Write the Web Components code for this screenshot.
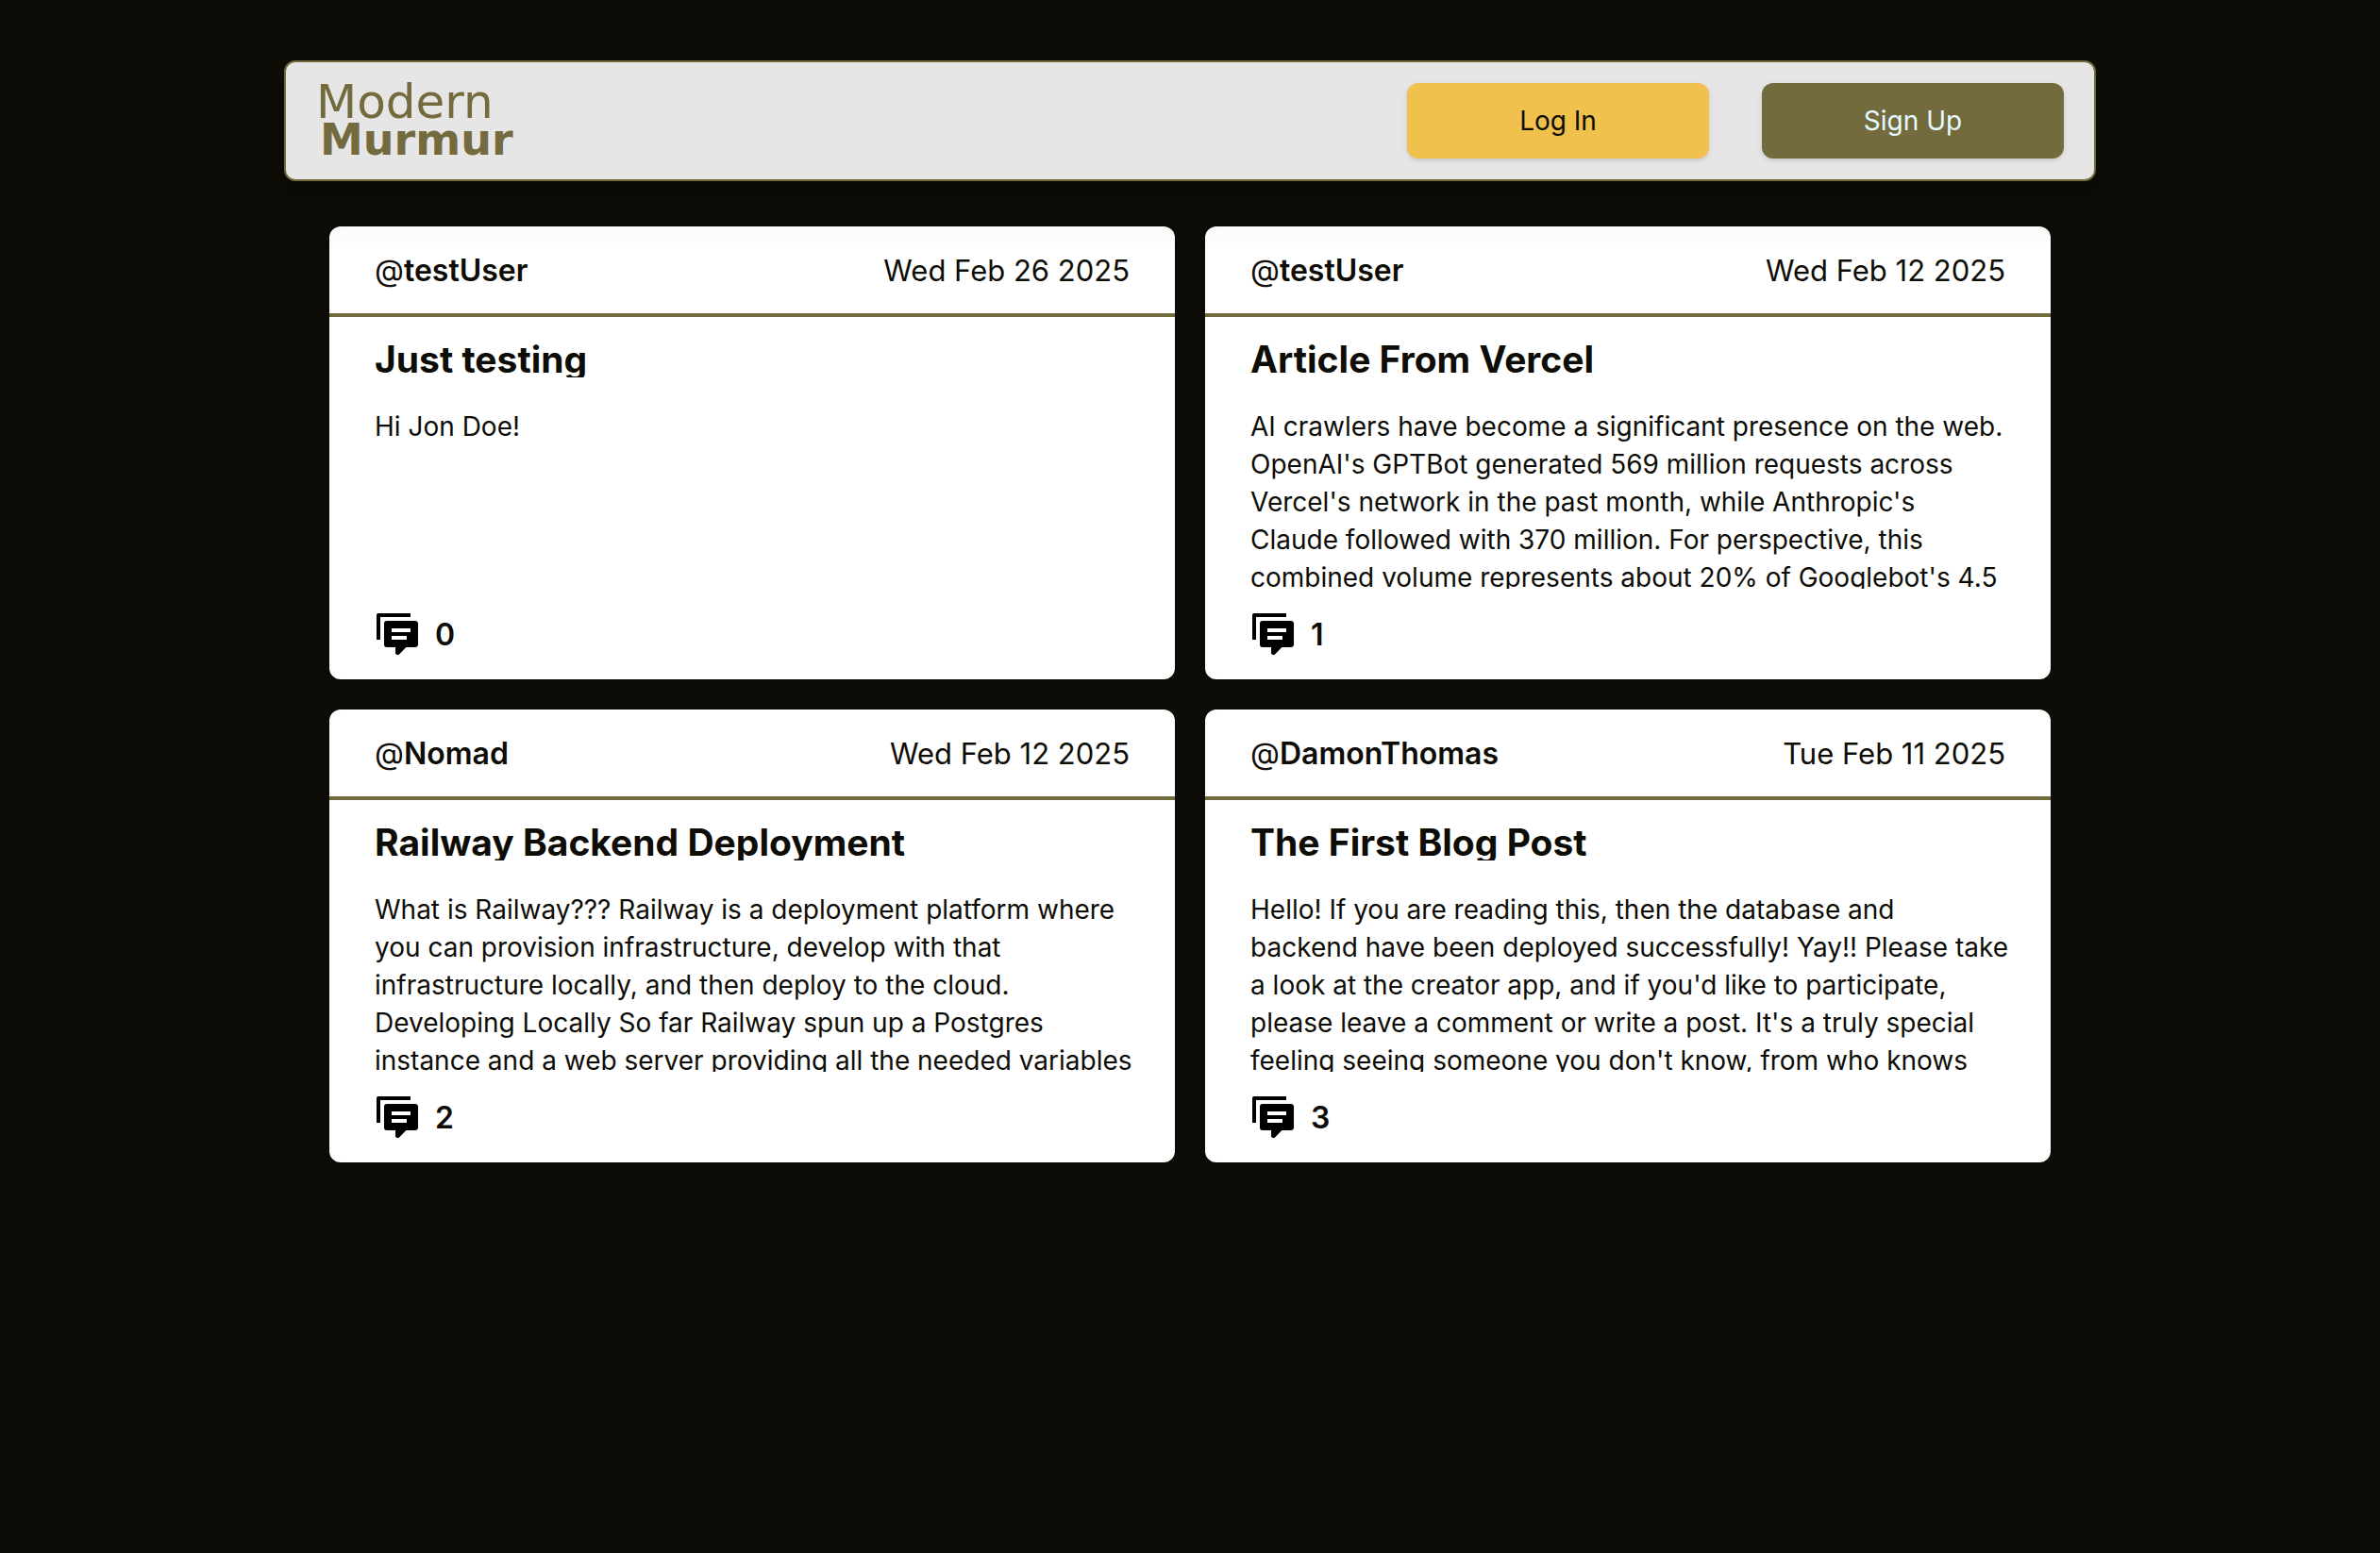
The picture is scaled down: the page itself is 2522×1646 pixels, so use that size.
<!DOCTYPE html>
<html lang="en">
<head>
<meta charset="utf-8">
<meta name="viewport" content="width=device-width, initial-scale=1">
<title>Modern Murmur</title>
<style>
  html { background: #0d0c06; }
  body {
    margin: 0;
    color: #0d0c06;
    font-family: Inter, "Liberation Sans", sans-serif;
    --ink: #0d0c06;
    --olive: #736b3d;
    --gold: #f0c14d;
    --panel: #e6e6e6;
    --ice: #e6fbff;
  }
</style>
</head>
<body>
<murmur-app></murmur-app>

<script>
const define = (name, html, setup) => {
  const template = document.createElement('template');
  template.innerHTML = html;
  customElements.define(name, class extends HTMLElement {
    constructor() {
      super();
      this.attachShadow({ mode: 'open' }).append(template.content.cloneNode(true));
    }
    connectedCallback() { if (setup) setup(this, this.shadowRoot); }
  });
};

define('murmur-logo', `
  <style>
    :host { display: block; }
    a {
      display: flex; flex-direction: column;
      color: var(--olive); text-decoration: none;
      font: 400 50px/40px "DejaVu Sans", sans-serif;
    }
    b { padding-left: 4px; font-size: 46px; font-weight: 700; }
  </style>
  <a href="#"><span>Modern</span><b>Murmur</b></a>
`);

define('murmur-button', `
  <style>
    :host { display: block; width: 320px; }
    button {
      width: 100%; height: 80px; padding: 0;
      border: 0; border-radius: 12px;
      background: var(--gold); color: var(--ink);
      font: 400 28px/40px Inter, "Liberation Sans", sans-serif;
      box-shadow: 0 2px 6px rgb(0 0 0 / .1), 0 2px 4px -2px rgb(0 0 0 / .1);
      cursor: pointer;
    }
    :host([variant="olive"]) button { background: var(--olive); color: var(--ice); }
  </style>
  <button type="button"><slot></slot></button>
`);

define('murmur-nav', `
  <style>
    :host { display: block; position: relative; z-index: 1; }
    nav {
      display: flex; align-items: center; justify-content: space-between;
      box-sizing: border-box; min-height: 128px;
      padding: 0 32px;
      border: 2px solid var(--olive); border-radius: 12px;
      background: var(--panel);
      box-shadow: 0 40px 50px -10px rgb(0 0 0 / .1), 0 16px 20px -12px rgb(0 0 0 / .1);
    }
    .actions { display: flex; gap: 56px; }
  </style>
  <nav>
    <murmur-logo></murmur-logo>
    <div class="actions">
      <murmur-button>Log In</murmur-button>
      <murmur-button variant="olive">Sign Up</murmur-button>
    </div>
  </nav>
`);

define('comments-icon', `
  <style>:host { display: block; width: 48px; height: 48px; } svg { display: block; }</style>
  <svg width="48" height="48" viewBox="0 0 24 24" fill="#000" aria-hidden="true">
    <path d="M1 15V2a1 1 0 0 1 1-1h17v2H3v12z"/>
    <path fill-rule="evenodd" d="M6.500 5h15A1.500 1.500 0 0 1 23 6.500v11a1.500 1.500 0 0 1-1.500 1.500h-4.800l-3.700 3.700a1 1 0 0 1-.7.3H12a1 1 0 0 1-1-1v-3H6.500A1.500 1.500 0 0 1 5 17.500v-11A1.500 1.500 0 0 1 6.500 5zM9 9v2h10V9zM9 13v2h8v-2z"/>
  </svg>
`);

define('post-card', `
  <style>
    :host { display: block; min-width: 0; }
    article { border-radius: 12px; background: #fff; overflow: hidden; }
    header {
      display: flex; align-items: baseline; justify-content: space-between;
      padding: 25px 48px 23px; border-bottom: 4px solid var(--olive);
      font-size: 32px; line-height: 44px;
    }
    .user b { font-weight: 600; }
    time { font-size: 31px; }
    .main { display: flex; flex-direction: column; gap: 32px; padding: 24px 40px 0 48px; }
    h2 {
      height: 40px; margin: 0; overflow: hidden;
      font-size: 39px; line-height: 42px; font-weight: 650;
    }
    .body { height: 192px; overflow: hidden; font-size: 28px; line-height: 40px; }
    footer {
      display: flex; align-items: center; gap: 16px; padding: 24px 48px;
      font-size: 32px; line-height: 44px; font-weight: 600;
    }
    .count { padding-top: 2px; }
  </style>
  <article>
    <header><span class="user">@<b></b></span><time></time></header>
    <div class="main">
      <h2></h2>
      <div class="body"><slot></slot></div>
    </div>
    <footer><comments-icon></comments-icon><span class="count"></span></footer>
  </article>
`, (host, root) => {
  root.querySelector('.user b').textContent = host.getAttribute('user');
  root.querySelector('time').textContent = host.getAttribute('date');
  root.querySelector('h2').textContent = host.getAttribute('heading');
  root.querySelector('.count').textContent = host.getAttribute('comments');
});

define('murmur-app', `
  <style>
    :host { display: block; max-width: 1920px; margin: 0 auto; padding: 64px 48px; }
    main {
      display: grid; grid-template-columns: repeat(2, minmax(0, 1fr));
      gap: 32px; padding: 48px;
    }
    @media (max-width: 1200px) { main { grid-template-columns: minmax(0, 1fr); } }
  </style>
  <murmur-nav></murmur-nav>
  <main>
    <post-card user="testUser" date="Wed Feb 26 2025" heading="Just testing" comments="0">Hi Jon Doe!</post-card>
    <post-card user="testUser" date="Wed Feb 12 2025" heading="Article From Vercel" comments="1">AI crawlers have become a significant presence on the web. OpenAI's GPTBot generated 569 million requests across Vercel's network in the past month, while Anthropic's<br> Claude followed with 370 million. For perspective, this<br> combined volume represents about 20% of Googlebot's 4.5</post-card>
    <post-card user="Nomad" date="Wed Feb 12 2025" heading="Railway Backend Deployment" comments="2">What is Railway??? Railway is a deployment platform where you can provision infrastructure, develop with that infrastructure locally, and then deploy to the cloud. Developing Locally So far Railway spun up a Postgres instance and a web server providing all the needed variables</post-card>
    <post-card user="DamonThomas" date="Tue Feb 11 2025" heading="The First Blog Post" comments="3">Hello! If you are reading this, then the database and<br> backend have been deployed successfully! Yay!! Please take<br> a look at the creator app, and if you'd like to participate,<br> please leave a comment or write a post. It's a truly special<br> feeling seeing someone you don't know, from who knows</post-card>
  </main>
`);
</script>
</body>
</html>
